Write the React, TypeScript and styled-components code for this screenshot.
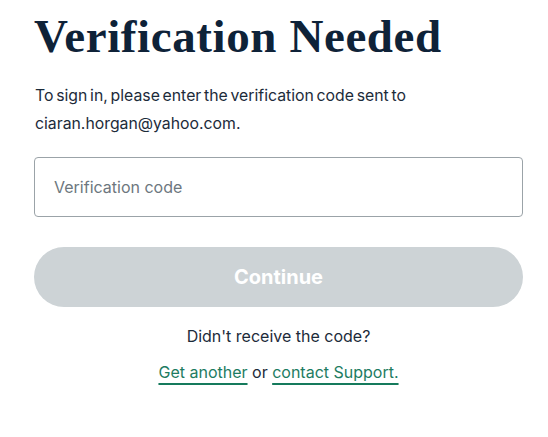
import React from "react";
import styled, { createGlobalStyle } from "styled-components";

const GlobalStyle = createGlobalStyle`
  body {
    margin: 0;
    background: #ffffff;
    font-family: Inter, "Noto Sans", sans-serif;
    color: #13253a;
  }
`;

const Page = styled.main`
  width: 489px;
  padding: 6px 0 0 34px;
  display: flex;
  flex-direction: column;
`;

const Title = styled.h1`
  margin: 0;
  font-family: "Liberation Serif", "DejaVu Serif", serif;
  font-weight: 700;
  font-size: 47px;
  line-height: 60px;
  letter-spacing: 0.6px;
  color: #0e2238;
`;

const Lead = styled.p`
  margin: 16px 0 0 1px;
  font-size: 15.8px;
  line-height: 28px;
  word-spacing: -1.7px;
  color: #1c2b3a;
`;

const Field = styled.input`
  margin-top: 19px;
  box-sizing: border-box;
  width: 489px;
  height: 60px;
  border: 1px solid #9ba3a8;
  border-radius: 4px;
  padding: 0 19px;
  font-family: Inter, "Noto Sans", sans-serif;
  font-size: 16px;
  color: #1c2b3a;
  outline: none;
  &::placeholder {
    color: #6d777e;
  }
`;

const Button = styled.button`
  margin-top: 30px;
  width: 489px;
  height: 60px;
  border: none;
  border-radius: 30px;
  background: #cdd3d6;
  color: #ffffff;
  font-family: Inter, "Noto Sans", sans-serif;
  font-weight: 700;
  font-size: 20px;
  cursor: not-allowed;
`;

const Help = styled.div`
  margin-top: 16px;
  display: flex;
  flex-direction: column;
  align-items: center;
  gap: 10px;
  font-size: 16px;
  line-height: 26px;
  color: #1c2b3a;
`;

const Link = styled.a`
  color: #1d7c62;
  text-decoration: underline;
  text-decoration-thickness: 2px;
  text-underline-offset: 5px;
  text-decoration-color: #157a5c;
`;

export default function App() {
  return (
    <>
      <GlobalStyle />
      <Page>
        <Title>Verification Needed</Title>
        <Lead>
          To sign in, please enter the verification code sent to
          <br />
          ciaran.horgan@yahoo.com.
        </Lead>
        <Field placeholder="Verification code" />
        <Button disabled>Continue</Button>
        <Help>
          <span>Didn't receive the code?</span>
          <span>
            <Link href="#">Get another</Link> or{" "}
            <Link href="#">contact Support.</Link>
          </span>
        </Help>
      </Page>
    </>
  );
}
